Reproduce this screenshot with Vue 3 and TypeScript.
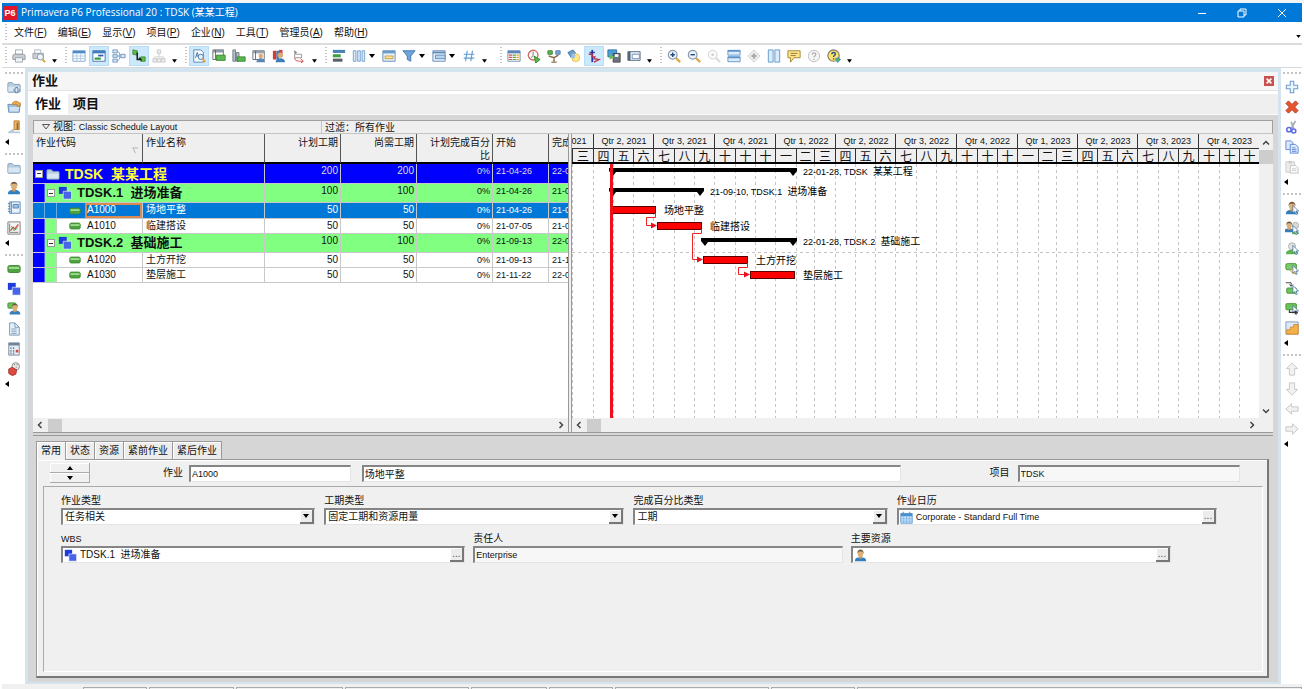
<script setup lang="ts">
import { computed, ref } from 'vue'

interface Tool { icon: string; name: string; on?: boolean; caret?: boolean }
interface Row {
  level: number; code: string; cjk?: string; name?: string; height: number
  planned: string; remaining: string; pct: string; start: string; finish: string
  from: number; to: number; label?: string; selected?: boolean
}

const person = '<path d="M1 15c0-4 3-5 7-5s7 1 7 5z" fill="#2f7fc0"/><path d="M6 9h4v3H6z" fill="#c9955c"/><ellipse cx="8" cy="6" rx="3.4" ry="4" fill="#dcb079"/><path d="M4 6c-.5-7 8.500-7 8 0-1-3-2-3-4-3s-3 0-4 3z" fill="#6d5a43"/>'
const cursor = '<path d="M9 5v9l2-2 1.500 3.500 1.500-.7-1.500-3.300h3z" fill="#fff" stroke="#4470a0" stroke-width=".9"/>'
const square2 = '<path d="M1 1h9v8H1z" fill="#1e3be0"/><path d="M6 6h9.500v9H6z" fill="#4a66e8" stroke="#fff" stroke-width=".7"/>'
const pill = '<rect x="1" y="4" width="14" height="8" rx="2" fill="#4fa33f" stroke="#3a8430"/><path d="M2 5.500h12v2.500H2z" fill="#9cd98d"/>'
const folder = '<path d="M1 4q0-1 1-1h4l2 2h6q1 0 1 1v7q0 1-1 1H2q-1 0-1-1z" fill="#b9cde0" stroke="#7d9ab8"/><path d="M1.500 7.500h13V13h-13z" fill="#d8e5f2"/>'
const lens = '<path d="M10 10l5 5" stroke="#e0aa4b" stroke-width="2.800"/><circle cx="6.500" cy="6.500" r="5" fill="#e8f2fb" stroke="#8a97a5" stroke-width="1.300"/>'

const icons: Record<string, string> = {
  print: '<path d="M4 1h8v5H4z" fill="#fff" stroke="#9aa3ac"/><path d="M1 8q0-2 2-2h10q2 0 2 2v4H1z" fill="#c9ced4" stroke="#8f979f"/><path d="M4 10h8v5H4z" fill="#eef4fa" stroke="#9aa3ac"/>',
  preview: '<path d="M3 1h7v4H3z" fill="#fff" stroke="#a8b0b8"/><path d="M1 5h12v6H1z" fill="#c9ced4" stroke="#9aa2aa"/><circle cx="9.500" cy="9" r="3.500" fill="#eef5fc" stroke="#8a939c"/><path d="M12 12l3 3" stroke="#e0a040" stroke-width="2.200"/>',
  table: '<path d="M1 2h14v12H1z" fill="#fff" stroke="#7fa6cf"/><path d="M1 2h14v3H1z" fill="#4f8bc9"/><path d="M1 8h14M1 11h14M5.500 5v9M10 5v9" stroke="#a9c6e4"/>',
  gantt: '<path d="M1 2h14v12H1z" fill="#fff" stroke="#3b6ea5"/><path d="M1 2h14v3H1z" fill="#3e7ec0"/><path d="M7 7.500h6" stroke="#2c58b8" stroke-width="2"/><path d="M3 11h7" stroke="#2f9a3a" stroke-width="2.500"/>',
  network: '<path d="M6 3q3 0 3 5 0 5-3 5M6 8h4" stroke="#6c93bf" fill="none"/><path d="M1 1h5v3.500H1zM1 6.500h5v3H1zM1 11.500h5v3.500H1zM10 6h5v4h-5z" fill="#d6e7f8" stroke="#6c93bf"/>',
  trace: '<path d="M1 1l5 1v5l-5-1zM10 9h5v5h-5z" fill="#5fbf4b" stroke="#3a8a2e"/><path d="M6 4v8h4M8 10l3 3" stroke="#222" stroke-width="1.800" fill="none"/>',
  tree: '<path d="M8 5v4M3 12V9h10v3" stroke="#ccc" fill="none"/><path d="M6 1h4v4H6zM1 11h4v4H1zM6 11h4v4H6zM11 11h4v4h-4z" fill="#ededed" stroke="#c8c8c8"/>',
  find: '<path d="M2 1h8l3 3v11H2z" fill="#f7fbff" stroke="#4f7fb4"/><path d="M4 10l2-6 2 6M5 8h2" stroke="#2f66a8" fill="none"/><circle cx="10" cy="9" r="3" fill="#dbeefc" stroke="#4d7396"/><path d="M12 11l3 4" stroke="#e0a040" stroke-width="2"/>',
  sheet: '<path d="M1 1h12v11H1z" fill="#fff" stroke="#5c6670"/><path d="M1 1h12v3H1z" fill="#8c98a4"/><path d="M4 1v11" stroke="#5c6670"/><path d="M5 7h10v6H5z" fill="#5cb84e" stroke="#35872b"/>',
  steps: '<path d="M1 1h3v13H1zM5 4h3v10H5z" fill="#b5bfca" stroke="#6b7681"/><path d="M6 9h9v5H6z" fill="#5cb84e" stroke="#35872b"/>',
  usage: '<path d="M1 2h13v10H1z" fill="#fff" stroke="#5c6670"/><path d="M1 2h13v3H1z" fill="#97a2ae"/><path d="M4 2v10" stroke="#5c6670"/><circle cx="10" cy="8" r="2.500" fill="#d9ac77"/><path d="M5 15c0-6 10-6 10 0z" fill="#5a86b0"/>',
  profile: '<path d="M1 2h4v10H1z" fill="#d33c32"/><path d="M5 2h3v10H5z" fill="#4c77b8"/><path d="M8 1h4v8H8z" fill="#c44"/><circle cx="9.500" cy="7" r="3" fill="#d9ac77"/><path d="M4 15c0-6 11-6 11 0z" fill="#3e7fb8"/>',
  logic: '<path d="M2 1l4 3-3 2z" fill="#888"/><path d="M3 6h8v4H3z" fill="#fff" stroke="#8f8f8f"/><path d="M3 10c0 4 4 4 9 4M10 11l3 3-3 2" stroke="#d04040" fill="none"/>',
  bars: '<path d="M1 1h14v3.500H1z" fill="#4a7fb5"/><path d="M1 6h9v3.500H1z" fill="#3ca03c"/><path d="M1 11h11v3.500H1z" fill="#59606a"/>',
  cols: '<path d="M1.500 2h3v12h-3zM6.500 2h3v12h-3zM11.500 2h3v12h-3z" fill="#d9e9f8" stroke="#6d9bcb"/>',
  layout: '<path d="M1 2h14v12H1z" fill="#e4effa" stroke="#5f88b5"/><path d="M1 2h14v3H1z" fill="#6d9bcb"/><path d="M3.500 8h9v3h-9z" fill="#ffe9a8" stroke="#c49a3a"/>',
  filter: '<path d="M1 2h14l-5 6v6l-4-2V8z" fill="#6ea4d8" stroke="#3c73aa"/>',
  group: '<path d="M1 2h14v12H1z" fill="#e4effa" stroke="#5f88b5"/><path d="M1 4h14" stroke="#5f88b5" stroke-width="2"/><path d="M4 7h11v4H4z" fill="#b9d4ef" stroke="#5f88b5"/>',
  hash: '<path d="M6 2L4 14M12 2l-2 12M2 6h12M2 10.500h12" stroke="#5d9bd3" stroke-width="1.300"/>',
  columns2: '<path d="M1 2h14v12H1z" fill="#fff" stroke="#6b8db5"/><path d="M1 2h14v3H1z" fill="#5b86ba"/><path d="M2 7h4M2 9.500h4M2 12h4" stroke="#d2544a" stroke-width="1.400"/><path d="M6.500 7h4M6.500 9.500h4M6.500 12h4" stroke="#58a94c" stroke-width="1.400"/><path d="M11 7h3M11 9.500h3M11 12h3" stroke="#e6a93a" stroke-width="1.400"/>',
  schedule: '<circle cx="7" cy="7" r="5.500" fill="#fff" stroke="#d26a62" stroke-width="1.600"/><path d="M7 3v4l-2 3" stroke="#666" fill="none"/><path d="M8 8l7 4-5 4z" fill="#55b848" stroke="#2f8726"/>',
  level: '<path d="M1 2h5v4H1z" fill="#5eb74f" stroke="#377f2c"/><path d="M10 2h5v4h-5z" fill="#77a7d9" stroke="#4d7cac"/><path d="M2 8l6 2 5-3M8 9v5M5 15h6" stroke="#8a6c4e" stroke-width="1.700" fill="none"/>',
  assign: '<path d="M1 4l6-3 3 4-5 5z" fill="#6e9fd4" stroke="#476f9e"/><circle cx="10" cy="10" r="4.500" fill="#ffe98a" stroke="#e6c04f"/><path d="M6 5l4 2-2 4-4-1z" fill="#9cc0e8"/>',
  spot: '<path d="M6 1v14" stroke="#2135a8" stroke-width="2"/><path d="M2 6h4v3h3L8 11l6 1-6 3" stroke="#b6304b" fill="none" stroke-width="1.500"/><path d="M3 4h6" stroke="#2135a8" stroke-width="1.500"/>',
  store: '<path d="M1 1h10v8H1z" fill="#48a0dd" stroke="#2e6c9c"/><path d="M7 5h8v10H7z" fill="#6d7680" stroke="#444"/><path d="M9 6h4v3H9z" fill="#fff"/><path d="M3 6l6 3-6 3z" fill="#61c04d"/>',
  board: '<path d="M1 3h14v10H1z" fill="#e3ecf5" stroke="#54677a"/><path d="M1 3h3v10H1z" fill="#54677a"/><path d="M6 6h8v5H6z" fill="#fff" stroke="#6b8db5"/>',
  zoomin: lens + '<path d="M4 6.500h5M6.500 4v5" stroke="#234b80" stroke-width="1.600"/>',
  zoomout: lens + '<path d="M4 6.500h5" stroke="#234b80" stroke-width="1.600"/>',
  zoomfit: '<path d="M10 10l5 5" stroke="#ddd" stroke-width="2.500"/><circle cx="6.500" cy="6.500" r="5" fill="#fafafa" stroke="#ccc"/><circle cx="6.500" cy="6.500" r="1.500" fill="#ccc"/>',
  split: '<path d="M1 1.500h14v5.500H1zM1 9h14v5.500H1z" fill="#dcebfa" stroke="#5c93cd"/><path d="M1 2h14M1 9.500h14" stroke="#5c93cd" stroke-width="2"/>',
  diamond: '<path d="M8 1l7 7-7 7-7-7z" fill="#eee" stroke="#ccc"/><path d="M8 5v6M5 8h6" stroke="#aaa" stroke-width="2.500"/>',
  vsplit: '<path d="M1.500 1h5.500v14H1.500zM9 1h5.500v14H9z" fill="#dcebfa" stroke="#5c93cd"/>',
  comment: '<path d="M1 2h14v8H8l-4 5v-5H1z" fill="#ffe58a" stroke="#9b7b2e"/><path d="M4 5h8M4 7.500h6" stroke="#8a7436"/>',
  helpoff: '<circle cx="8" cy="8" r="6.500" fill="#f5f5f5" stroke="#bbb"/><path d="M6 6.500c0-3 4.500-2.500 4 0-.3 1.500-2 1.500-2 3M8 11v1.500" stroke="#aaa" fill="none" stroke-width="1.300"/>',
  help: '<circle cx="7.500" cy="7.500" r="6.500" fill="#ffe26b" stroke="#7c7d66" stroke-width="1.300"/><path d="M5.500 6c0-3 4.500-2.500 4 0-.3 1.500-2 1.500-2 3M7.500 10.500V12" stroke="#2a4f85" fill="none" stroke-width="1.600"/><path d="M9 11l4-2 3 3-4 4z" fill="#3f92c9"/><path d="M10 13l4-3v4z" fill="#64b447"/>',
  foldernew: folder + '<path d="M11 8v7M7.500 11.500h7" stroke="#6888ab" stroke-width="3"/><path d="M11 9v5M8.500 11.500h5" stroke="#e2edf8" stroke-width="1.200"/>',
  folderopen: '<path d="M1 5h14l-1 9H2z" fill="#9fc1e3" stroke="#648bb2"/><path d="M3 8h11l-1 5H3z" fill="#cfe2f4"/><path d="M6 5c1-5 7-4 8-1l1-1v4h-4l1-1c-1-2-3-2-4 0z" fill="#f2b04c" stroke="#b8782a"/>',
  exit: '<path d="M8 1h6v10H8z" fill="#f1b45e" stroke="#b2772b"/><path d="M11 3h2v8h-2z" fill="#8a6b45"/><path d="M1 14l7-5v4h7v2H1z" fill="#b8cadc"/>',
  folder, person, square2, pill,
  book: '<path d="M3 1h12v13H3z" fill="#e9f2fb" stroke="#4e80b3"/><path d="M5 1v13" stroke="#4e80b3"/><path d="M1 3h3M1 6h3M1 9h3M1 12h3" stroke="#6d92b8" stroke-width="1.300"/><path d="M7 4h6v4H7z" fill="#9fc2e6" stroke="#4e80b3"/>',
  chart: '<path d="M1 1h14v14H1z" fill="#f3f3f3" stroke="#777"/><path d="M3 3v10h10" stroke="#777" fill="none"/><path d="M4 11l3-4 2 2 4-5" stroke="#d04343" stroke-width="1.400" fill="none"/><path d="M5 6l3 5 4-3" stroke="#3ca03c" fill="none"/>',
  pillperson: '<rect x="1" y="1" width="9" height="6" rx="1" fill="#6dc45c" stroke="#3f8f34"/><g transform="translate(2 1) scale(.88)">' + person + '</g>',
  doc: '<path d="M3 1h6l5 5v9H3z" fill="#e6f0fa" stroke="#7392b2"/><path d="M9 1v5h5M5 8h6M5 10.500h6M5 13h6" stroke="#7392b2" fill="none"/>',
  calc: '<path d="M2 1h12v14H2z" fill="#e8eef5" stroke="#71859a"/><path d="M2 1h12v3H2z" fill="#71859a"/><path d="M4.500 6v8M7.500 6v8" stroke="#71859a" stroke-width="1.500" stroke-dasharray="2 1"/><path d="M10 9h3v3h-3z" fill="#d24b44"/>',
  risk: '<circle cx="10" cy="5" r="4.300" fill="#e6e6e6" stroke="#888"/><path d="M8 3h1M11 3h1M10 6h1" stroke="#666"/><path d="M2 8l4-2 5 3-1 5-4 1.500L2 13z" fill="#dc4b42" stroke="#a42d27"/>',
  plus: '<path d="M6 1.500h4V6h4.500v4H10v4.500H6V10H1.500V6H6z" fill="#e9f4fd" stroke="#6f9cc9" stroke-width="1.200"/>',
  del: '<path d="M4 1l4 4 4-4 3 3-4 4 4 4-3 3-4-4-4 4-3-3 4-4-4-4z" fill="#e8542e" stroke="#b03a20"/>',
  cut: '<path d="M12 1L7 10M7 2l3 8" stroke="#a5acb3" stroke-width="2"/><circle cx="4.500" cy="11" r="2.500" fill="none" stroke="#5c6be0" stroke-width="1.800"/><circle cx="10" cy="12.500" r="2.300" fill="none" stroke="#5c6be0" stroke-width="1.800"/>',
  copy: '<path d="M1 1h6l2 2v8H1z" fill="#dce8fb" stroke="#5d83d6"/><path d="M6 5h6l3 3v7H6z" fill="#dce8fb" stroke="#5d83d6"/><path d="M8 9h4M8 11h5M8 13h5" stroke="#5d83d6"/>',
  paste: '<path d="M1 2h10v12H1z" fill="#ededed" stroke="#c9c9c9"/><path d="M4 1h4v3H4z" fill="#ccc"/><path d="M6 6h6l3 3v6H6z" fill="#fafafa" stroke="#c0c0c0"/><path d="M8 10h5M8 12h5" stroke="#ccc"/>',
  persona: person + cursor,
  peoplea: '<g transform="translate(-2 0) scale(.85)">' + person + '</g><circle cx="12" cy="5" r="3.500" fill="#dcdcdc" stroke="#aaa"/><path d="M8 15c0-5 8-5 8 0z" fill="#61b757"/>' + cursor,
  rolea: '<path d="M1 15c0-4 3-5 7-5s7 1 7 5z" fill="#5cb54f"/><circle cx="8" cy="6" r="4" fill="#e3e3e3" stroke="#aaa"/>' + cursor,
  codea: '<rect x="1" y="3" width="12" height="7" rx="1.500" fill="#7bcb6b" stroke="#3f8f34"/><path d="M10 7l4 4-4 4-4-4z" fill="#ffe08a" stroke="#caa044"/>' + cursor,
  preda: '<path d="M1 2h6v4M5 4l2 2 2-2" stroke="#333" fill="none"/><rect x="2" y="8" width="11" height="6" rx="1" fill="#6dc45c" stroke="#3f8f34"/>' + cursor,
  succa: '<rect x="1" y="3" width="12" height="7" rx="1" fill="#6dc45c" stroke="#3f8f34"/>' + cursor + '<path d="M5 10v3h8M11 11l3 2-3 2" stroke="#333" fill="none" stroke-width="1.200"/>',
  stairs: '<path d="M1 1h14v14H1z" fill="#dbe8f8" stroke="#7796c4"/><path d="M2 14v-4h4V7h4V4h5v11H2z" fill="#f6b04a" stroke="#d28a25"/>',
  up: '<path d="M8 1l6.500 6.500h-3.500V15H5V7.500H1.500z" fill="#f1f1f1" stroke="#c2c2c2"/>',
  down: '<path d="M8 15L1.500 8.500H5V1h6v7.500h3.500z" fill="#f1f1f1" stroke="#c2c2c2"/>',
  left: '<path d="M1 8l6.500-6v3.500H15v5H7.500V14z" fill="#f1f1f1" stroke="#c2c2c2"/>',
  right: '<path d="M15 8L8.500 2v3.500H1v5h7.500V14z" fill="#f1f1f1" stroke="#c2c2c2"/>',
  calendar: '<path d="M1 3h14v12H1z" fill="#cfe6fb" stroke="#4a90d0"/><path d="M1 3h14v3.500H1z" fill="#4a90d0"/><path d="M1 9.500h14M1 12.500h14M4.500 6v9M8 6v9M11.500 6v9" stroke="#6fadde" stroke-width=".8"/><path d="M4 1v3M12 1v3" stroke="#888" stroke-width="1.300"/>',
}

const menus = [['文件', 'F'], ['编辑', 'E'], ['显示', 'V'], ['项目', 'P'], ['企业', 'N'], ['工具', 'T'], ['管理员', 'A'], ['帮助', 'H']]

const t = (icon: string, name: string, on = false, caret = false): Tool => ({ icon, name, on, caret })
const toolbar: Tool[][] = [
  [t('print', '打印'), t('preview', '打印预览')],
  [t('table', '作业表格'), t('gantt', '横道图', true), t('network', '作业网络图'), t('trace', '跟踪逻辑', true), t('tree', '组织图')],
  [t('find', '作业详情', true), t('sheet', '作业使用剖析表'), t('steps', '作业使用直方图'), t('usage', '资源使用剖析表'), t('profile', '资源使用直方图'), t('logic', '逻辑关系')],
  [t('bars', '横道'), t('cols', '栏位', false, true), t('layout', '时间标尺'), t('filter', '过滤器', false, true), t('group', '分组和排序', false, true), t('hash', '编号')],
  [t('columns2', '表格字体'), t('schedule', '进度计算'), t('level', '资源平衡'), t('assign', '应用实际值'), t('spot', '进展线', true), t('store', '保存期间执行情况'), t('board', '汇总')],
  [t('zoomin', '放大'), t('zoomout', '缩小'), t('zoomfit', '缩放至合适'), t('split', '水平拆分'), t('diamond', '居中'), t('vsplit', '垂直拆分'), t('comment', '提示'), t('helpoff', '关于'), t('help', '帮助')],
]
const leftRail = [
  ['foldernew', 'folderopen', 'exit'],
  ['folder', 'person', 'book', 'chart'],
  ['pill', 'square2', 'pillperson', 'doc', 'calc', 'risk'],
]
const rightRail = [
  ['plus', 'del', 'cut', 'copy', 'paste'],
  ['persona', 'peoplea', 'rolea', 'codea', 'preda', 'succa', 'stairs'],
  ['up', 'down', 'left', 'right'],
]

const day = (s: string) => Math.round((Date.parse(s) - Date.parse('2021-04-01')) / 86400000)
const rows: Row[] = [
  { level: 0, code: 'TDSK', cjk: '某某工程', height: 20, planned: '200', remaining: '200', pct: '0%', start: '21-04-26', finish: '22-01-28', from: day('2021-04-26'), to: day('2022-01-29'), label: '22-01-28, TDSK' },
  { level: 1, code: 'TDSK.1', cjk: '进场准备', height: 19, planned: '100', remaining: '100', pct: '0%', start: '21-04-26', finish: '21-09-10', from: day('2021-04-26'), to: day('2021-09-11'), label: '21-09-10, TDSK.1' },
  { level: 2, code: 'A1000', name: '场地平整', height: 16, planned: '50', remaining: '50', pct: '0%', start: '21-04-26', finish: '21-07-02', from: day('2021-04-26'), to: day('2021-07-03'), selected: true },
  { level: 2, code: 'A1010', name: '临建搭设', height: 15, planned: '50', remaining: '50', pct: '0%', start: '21-07-05', finish: '21-09-10', from: day('2021-07-05'), to: day('2021-09-11') },
  { level: 1, code: 'TDSK.2', cjk: '基础施工', height: 19, planned: '100', remaining: '100', pct: '0%', start: '21-09-13', finish: '22-01-28', from: day('2021-09-13'), to: day('2022-01-29'), label: '22-01-28, TDSK.2' },
  { level: 2, code: 'A1020', name: '土方开挖', height: 15, planned: '50', remaining: '50', pct: '0%', start: '21-09-13', finish: '21-11-19', from: day('2021-09-13'), to: day('2021-11-20') },
  { level: 2, code: 'A1030', name: '垫层施工', height: 15, planned: '50', remaining: '50', pct: '0%', start: '21-11-22', finish: '22-01-28', from: day('2021-11-22'), to: day('2022-01-29') },
]

const PX_PER_DAY = 0.663
const dayX = (d: number) => Math.round(22 + d * PX_PER_DAY)
const monthX = (i: number) => dayX(day(`${2021 + Math.floor(i / 12)}-${String((i % 12) + 1).padStart(2, '0')}-01`))
const monthNames = ['一', '二', '三', '四', '五', '六', '七', '八', '九', '十', '十', '十']
const quarters = Array.from({ length: 12 }, (_, q) => ({
  name: `Qtr ${(q % 4) + 1}, ${2021 + Math.floor(q / 4)}`,
  width: monthX(q * 3 + 3) - monthX(q * 3),
  months: [0, 1, 2].map(m => ({ name: monthNames[(q * 3 + m) % 12], width: monthX(q * 3 + m + 1) - monthX(q * 3 + m) })),
}))
const gridLines = Array.from({ length: 34 }, (_, i) => monthX(i + 2))

const bars = computed(() => {
  let top = 0
  return rows.map(r => {
    const b = { ...r, x1: dayX(r.from), x2: dayX(r.to), y: top + (r.level < 2 ? 4 : 3) }
    top += r.height
    return b
  })
})
const summaryPath = (a: number, b: number, y: number) =>
  `M${a - 2} ${y}H${b + 2}V${y + 3}L${b - 2} ${y + 8}L${b - 5} ${y + 4}H${a + 5}L${a + 2} ${y + 8}L${a - 2} ${y + 3}z`
const links = computed(() => [[2, 3], [3, 5], [5, 6]].map(([p, s]) => {
  const a = bars.value[p], b = bars.value[s]
  const y = b.y + 3
  return { line: `M${a.x2 - 0.5} ${a.y + 7}v4.500h-9V${y + 0.5}H${b.x1 - 3}`, head: `M${b.x1} ${y + 0.5}l-6-3v6z` }
}))

const tab = ref('常用')
const detailTabs = ['常用', '状态', '资源', '紧前作业', '紧后作业']
const status = ['', '访问模式: 共享', '数据日期: 21-04-26', '基线: 当前项目', '用户: admin', '', '', '', '']
</script>

<template>
  <div class="app">
    <header class="title">
      <span class="logo">P6</span>
      <h1>Primavera P6 Professional 20 : TDSK <span>(某某工程)</span></h1>
      <div class="win">
        <button aria-label="最小化"><svg viewBox="0 0 10 10"><path d="M1 5.500h8" /></svg></button>
        <button aria-label="还原"><svg viewBox="0 0 10 10"><path d="M1 3h6v6H1zM3 3V1h6v6H7" /></svg></button>
        <button aria-label="关闭"><svg viewBox="0 0 10 10"><path d="M1 1l8 8M9 1L1 9" /></svg></button>
      </div>
    </header>

    <nav class="menu">
      <i class="vgrip"></i>
      <button v-for="m in menus" :key="m[1]">{{ m[0] }}<span>(<u>{{ m[1] }}</u>)</span></button>
      <svg class="more" viewBox="0 0 6 4"><path d="M0 0h6L3 4z" /></svg>
    </nav>

    <div class="toolbar">
      <div v-for="(g, i) in toolbar" :key="i" class="tools" :class="{ roomy: i === 3 }">
        <i class="vgrip"></i>
        <template v-for="b in g" :key="b.icon">
          <button class="tool" :class="{ on: b.on }" :aria-label="b.name"><svg viewBox="0 0 16 16" v-html="icons[b.icon]"></svg></button>
          <svg v-if="b.caret" class="caret" viewBox="0 0 6 4"><path d="M0 0h6L3 4z" /></svg>
        </template>
        <svg class="end" viewBox="0 0 6 4"><path d="M0 0h6L3 4z" /></svg>
      </div>
    </div>

    <div class="work">
      <aside class="rail">
        <div v-for="(g, i) in leftRail" :key="i" class="rgroup">
          <i class="hgrip"></i>
          <button v-for="n in g" :key="n" class="tool" :aria-label="n"><svg viewBox="0 0 16 16" v-html="icons[n]"></svg></button>
          <svg class="rend" viewBox="0 0 4 6"><path d="M4 0v6L0 3z" /></svg>
        </div>
      </aside>

      <main class="frame">
        <div class="caption"><h2>作业</h2><button class="close" aria-label="关闭视图"><svg viewBox="0 0 10 10"><path d="M2 2l6 6M8 2L2 8" /></svg></button></div>
        <div class="views" role="tablist">
          <button role="tab" aria-selected="true" class="cur">作业</button>
          <button role="tab" aria-selected="false">项目</button>
        </div>

        <div class="inner">
          <div class="layoutbar">
            <button class="lay"><svg viewBox="0 0 8 6"><path d="M.5.5h7L4 5z" /></svg>视图: <span class="lat">Classic Schedule Layout</span></button>
            <span class="filt">过滤：所有作业</span>
          </div>

          <div class="panes">
            <section class="left">
              <div class="tablebox">
                <table>
                  <colgroup><col class="c1"><col class="c2"><col class="c3"><col class="c4"><col class="c5"><col class="c6"><col class="c7"></colgroup>
                  <thead>
                    <tr>
                      <th>作业代码<svg class="sort" viewBox="0 0 8 8"><path d="M1 1h6M1 1l3 6" /></svg></th>
                      <th>作业名称</th><th class="r">计划工期</th><th class="r">尚需工期</th><th class="r">计划完成百分比</th><th>开始</th><th>完成</th>
                    </tr>
                  </thead>
                  <tbody>
                    <tr v-for="r in rows" :key="r.code" :class="['l' + r.level, { sel: r.selected }]" :style="{ height: r.height + 'px' }">
                      <td :colspan="r.level < 2 ? 2 : 1" class="tree">
                        <div class="treeline" :style="{ height: r.height - 1 + 'px' }">
                          <i v-if="r.level > 0" class="band b0"></i>
                          <i v-if="r.level > 1" class="band b1"></i>
                          <template v-if="r.level < 2">
                            <button class="exp" aria-label="折叠"></button>
                            <svg class="nodeic" viewBox="0 0 16 16" v-html="icons[r.level === 0 ? 'folder' : 'square2']"></svg>
                            <b>{{ r.code }}&nbsp; {{ r.cjk }}</b>
                          </template>
                          <template v-else>
                            <svg class="leafic" viewBox="0 0 16 16" v-html="icons.pill"></svg>
                            <span class="code">{{ r.code }}</span>
                          </template>
                        </div>
                      </td>
                      <td v-if="r.level > 1">{{ r.name }}</td>
                      <td class="r">{{ r.planned }}</td><td class="r">{{ r.remaining }}</td><td class="r"><span class="lat">{{ r.pct }}</span></td>
                      <td><span class="lat">{{ r.start }}</span></td><td><span class="lat">{{ r.finish }}</span></td>
                    </tr>
                  </tbody>
                </table>
              </div>
              <div class="hscroll">
                <button aria-label="向左"><svg viewBox="0 0 8 8"><path d="M5.500 1l-3 3 3 3" /></svg></button><i class="thumb"></i>
                <button class="last" aria-label="向右"><svg viewBox="0 0 8 8"><path d="M2.500 1l3 3-3 3" /></svg></button>
              </div>
            </section>

            <div class="splitter"></div>

            <section class="right">
              <div class="chartcol">
                <div class="scale">
                  <div class="strip" :style="{ marginLeft: monthX(0) + 'px' }">
                    <div v-for="q in quarters" :key="q.name" class="qtr" :style="{ width: q.width + 'px' }">
                      <div class="qname lat">{{ q.name }}</div>
                      <div class="months"><span v-for="(m, i) in q.months" :key="i" :style="{ width: m.width + 'px' }">{{ m.name }}</span></div>
                    </div>
                  </div>
                </div>
                <svg class="chart">
                  <line v-for="x in gridLines" :key="x" :x1="x - 0.5" :x2="x - 0.5" y1="0" y2="100%" class="grid" />
                  <line x1="0" x2="100%" y1="88.500" y2="88.500" class="grid" />
                  <template v-for="b in bars" :key="b.code">
                    <path v-if="b.level < 2" :d="summaryPath(b.x1, b.x2, b.y)" />
                    <rect v-else :x="b.x1 + 0.5" :y="b.y + 0.5" :width="b.x2 - b.x1 - 1" height="7" class="task" />
                    <text v-if="b.level < 2" :x="b.x2 + 8" :y="b.y + 7"><tspan class="tl">{{ b.label }}</tspan><tspan dx="5">{{ b.cjk }}</tspan></text>
                    <text v-else :x="b.x2 + 8" :y="b.y + 8">{{ b.name }}</text>
                  </template>
                  <g v-for="l in links" :key="l.line"><path :d="l.line" class="link" /><path :d="l.head" class="head" /></g>
                  <rect :x="bars[0].x1 - 1" y="0" width="3" height="100%" class="now" />
                </svg>
                <div class="hscroll">
                  <button aria-label="向左"><svg viewBox="0 0 8 8"><path d="M5.500 1l-3 3 3 3" /></svg></button><i class="thumb"></i>
                  <button class="last" aria-label="向右"><svg viewBox="0 0 8 8"><path d="M2.500 1l3 3-3 3" /></svg></button>
                </div>
              </div>
              <div class="vscroll">
                <button aria-label="向上"><svg viewBox="0 0 8 8"><path d="M1 5.500l3-3 3 3" /></svg></button><i class="thumb"></i>
                <button class="last" aria-label="向下"><svg viewBox="0 0 8 8"><path d="M1 2.500l3 3 3-3" /></svg></button>
              </div>
            </section>
          </div>

          <section class="details">
            <div class="dtabs" role="tablist">
              <button v-for="d in detailTabs" :key="d" role="tab" :aria-selected="tab === d" :class="{ cur: tab === d }" @click="tab = d">{{ d }}</button>
            </div>
            <div class="dpanel">
              <div class="idrow">
                <div class="spin">
                  <button aria-label="上一个"><svg viewBox="0 0 6 4"><path d="M0 4h6L3 0z" /></svg></button>
                  <button aria-label="下一个"><svg viewBox="0 0 6 4"><path d="M0 0h6L3 4z" /></svg></button>
                </div>
                <label for="act">作业</label>
                <input id="act" class="box lat f-id" value="A1000">
                <input class="box f-name" aria-label="作业名称" value="场地平整">
                <label for="proj" class="lproj">项目</label>
                <input id="proj" class="box lat ro f-proj" value="TDSK" readonly>
              </div>
              <div class="fieldset">
                <div class="frow one">
                  <div class="field"><label for="type">作业类型</label><div class="box combo"><select id="type"><option>任务相关</option></select><span class="drop"><svg viewBox="0 0 6 4"><path d="M0 0h6L3 4z" /></svg></span></div></div>
                  <div class="field"><label for="dur">工期类型</label><div class="box combo"><select id="dur"><option>固定工期和资源用量</option></select><span class="drop"><svg viewBox="0 0 6 4"><path d="M0 0h6L3 4z" /></svg></span></div></div>
                  <div class="field"><label for="pct">完成百分比类型</label><div class="box combo"><select id="pct"><option>工期</option></select><span class="drop"><svg viewBox="0 0 6 4"><path d="M0 0h6L3 4z" /></svg></span></div></div>
                  <div class="field"><label for="cal">作业日历</label><div class="box combo"><svg class="fic" viewBox="0 0 16 16" v-html="icons.calendar"></svg><input id="cal" class="lat" value="Corporate - Standard Full Time"><button class="drop" aria-label="选择日历">...</button></div></div>
                </div>
                <div class="frow two">
                  <div class="field"><label for="wbs" class="lat">WBS</label><div class="box combo"><svg class="fic" viewBox="0 0 16 16" v-html="icons.square2"></svg><input id="wbs" value="TDSK.1  进场准备"><button class="drop" aria-label="选择 WBS">...</button></div></div>
                  <div class="field"><label for="resp">责任人</label><input id="resp" class="box lat ro" value="Enterprise" readonly></div>
                  <div class="field"><label for="res">主要资源</label><div class="box combo"><svg class="fic" viewBox="0 0 16 16" v-html="icons.person"></svg><input id="res" value=""><button class="drop" aria-label="选择资源">...</button></div></div>
                </div>
              </div>
            </div>
          </section>
        </div>
      </main>

      <aside class="rail">
        <div v-for="(g, i) in rightRail" :key="i" class="rgroup">
          <i class="hgrip"></i>
          <button v-for="n in g" :key="n" class="tool" :aria-label="n"><svg viewBox="0 0 16 16" v-html="icons[n]"></svg></button>
          <svg class="rend" viewBox="0 0 4 6"><path d="M4 0v6L0 3z" /></svg>
        </div>
      </aside>
    </div>

    <footer class="status"><span v-for="(s, i) in status" :key="i">{{ s }}</span></footer>
  </div>
</template>

<style>
html, body { background: #fff; }
</style>

<style scoped>
* { box-sizing: border-box; }
.app { height: 100vh; min-height: 560px; display: flex; flex-direction: column; padding: 0 2px; border-top: 3px solid #f3f3f3; background: #fff; overflow: hidden; font: 10px/14px "Liberation Sans", "Noto Sans CJK SC", sans-serif; color: #111; }
button, input, select { font: inherit; color: inherit; border: 0; background: none; padding: 0; margin: 0; min-width: 0; }
button { display: flex; align-items: center; justify-content: center; }
h1, h2 { margin: 0; }
svg { display: block; flex: none; }
.lat { font-size: 9px; }

.title { flex: none; height: 19px; background: #0078d7; color: #fff; display: flex; align-items: center; }
.logo { width: 14px; height: 14px; margin-left: 1px; background: #e0162b; font-weight: bold; font-size: 9px; line-height: 14px; text-align: center; }
h1 { margin-left: 4px; font: 10px/19px "Open Sans", "Noto Sans CJK SC", sans-serif; }
.win { margin-left: auto; display: flex; padding-right: 15px; gap: 30px; }
.win svg { width: 10px; height: 10px; fill: none; stroke: #fff; stroke-width: 1; }

.menu { flex: none; height: 23px; display: flex; align-items: center; gap: 11px; padding-left: 3px; border-bottom: 2px solid #dcdcdc; }
.menu button { white-space: nowrap; }
.menu .vgrip { margin-right: -4px; }
.more { width: 5px; height: 3px; margin: 8px 1px 0 auto; }
.vgrip { width: 2px; height: 18px; background: repeating-linear-gradient(#c4c4c4 0 1px, transparent 1px 3px); flex: none; }

.toolbar { flex: none; height: 22px; display: flex; align-items: center; padding-left: 3px; }
.tools { display: flex; align-items: center; height: 20px; }
.tools .vgrip { margin-right: 2px; }
.tool { width: 20px; height: 20px; flex: none; }
.tool svg { width: 14px; height: 14px; }
.tool.on { background: #cce8fb; border: 1px solid #b6defa; }
.caret { width: 6px; height: 4px; margin: 0 4px 0 0; }
.end { width: 5px; height: 4px; margin: 10px 8px 0 3px; }
.roomy .end { margin-right: 13px; }

.work { flex: 1; min-height: 0; display: flex; border-top: 1px solid #d8d8d8; }
.rail { flex: none; width: 23px; padding-top: 2px; }
.rail:last-child { width: 21px; }
.rgroup { display: flex; flex-direction: column; align-items: center; }
.hgrip { width: 18px; height: 2px; margin: 2px 0 3px; background: repeating-linear-gradient(90deg, #c4c4c4 0 2px, transparent 2px 4px); }
.rend { width: 4px; height: 6px; margin: 2px 0 6px 3px; align-self: flex-start; }

.frame { flex: 1; min-width: 0; display: flex; flex-direction: column; border: solid #d3e4ef; border-width: 4px 3px 2px; background: #d6d6d6; }
.caption { flex: none; height: 19px; background: #f5f5f5; display: flex; align-items: center; justify-content: space-between; padding: 0 4px; border-bottom: 1px solid #e2e2e2; }
h2 { font-size: 13px; line-height: 16px; font-weight: bold; }
.close { width: 10px; height: 10px; background: #c8504f; }
.close svg { width: 8px; height: 8px; stroke: #fff; stroke-width: 2; }
.views { flex: none; height: 24px; background: #efefef; border-top: 3px solid #fff; border-bottom: 1px solid #fafafa; display: flex; }
.views button { padding: 0 5px; font-size: 13px; font-weight: bold; }
.views .cur { background: #fff; width: 40px; }

.inner { flex: 1; min-height: 0; display: flex; flex-direction: column; padding: 5px 5px 4px 5px; }
.layoutbar { flex: none; height: 14px; background: #efefef; border: 1px solid #a0a0a0; border-bottom-color: #c4c4c4; display: flex; }
.lay { width: 288px; justify-content: flex-start; padding-left: 8px; gap: 3px; border-right: 1px solid #c4c4c4; }
.lay svg { width: 8px; height: 6px; fill: none; stroke: #555; }
.filt { padding-left: 3px; line-height: 13px; }

.panes { flex: 1; min-height: 200px; display: flex; background: #fff; border-bottom: 1px solid #999; }
.left { flex: 0 0 535px; min-width: 0; display: flex; flex-direction: column; }
.tablebox { flex: 1; min-height: 0; overflow: hidden; }
table { table-layout: fixed; width: 593px; border-collapse: separate; border-spacing: 0; }
.c1 { width: 110px; } .c2 { width: 122px; } .c3, .c4, .c5 { width: 76px; } .c6 { width: 56px; } .c7 { width: 77px; }
th { height: 30px; padding: 2px 2px 0 3px; vertical-align: top; text-align: left; font-weight: normal; line-height: 13px; background: #efefef; border-right: 1px solid #555; border-bottom: 2px solid #000; position: relative; }
th.r { padding-left: 8px; }
th.r, td.r { text-align: right; }
.sort { position: absolute; right: 3px; bottom: 8px; width: 7px; height: 7px; fill: none; stroke: #aaa; }
td { padding: 0 2px 0 3px; vertical-align: top; white-space: nowrap; overflow: hidden; border-right: 1px solid #c8c8c8; border-bottom: 1px solid #c8c8c8; line-height: 14px; height: 14px; }
td .lat { display: block; }
td.tree { padding: 0; }
.treeline { display: flex; align-items: center; }
.band { width: 12px; height: 100%; flex: none; box-shadow: 0 1px 0 currentColor; }
.b0 { background: #00f; color: #00f; border-right: 1px solid #55f; }
.b1 { background: #80ff80; color: #80ff80; border-right: 1px solid #b8d8b8; }
.l0 td { background: #00f; color: #ddd; }
.l0 b { color: #ff3; font-size: 14px; }
.l1 td { background: #80ff80; }
.l1 b { font-size: 13px; }
.sel td { background: #0078d7; color: #fff; }
.sel .band { background: #0078d7; border-color: #66aee8; }
.exp { width: 8px; height: 8px; margin-left: 2px; background: linear-gradient(#333, #333) center / 4px 1px no-repeat #fff; border: 1px solid #999; flex: none; }
.nodeic { width: 14px; height: 14px; margin: 0 5px 0 3px; }
.leafic { width: 12px; height: 12px; margin: 0 4px 0 12px; }
.code { flex: 1; height: 100%; padding-left: 2px; }
.sel .code { outline: 2px solid #d88a50; outline-offset: -2px; }

.splitter { width: 4px; flex: none; background: #f0f0f0; border: solid #999; border-width: 0 1px; cursor: col-resize; }
.right { flex: 1; min-width: 0; display: flex; }
.chartcol { flex: 1; min-width: 0; display: flex; flex-direction: column; }
.scale { height: 30px; flex: none; overflow: hidden; background: #efefef; border-bottom: 2px solid #000; }
.strip { display: flex; width: max-content; }
.qtr { flex: none; border-right: 1px solid #333; }
.qname { height: 15px; line-height: 15px; text-align: center; border-bottom: 1px solid #333; margin-right: -1px; }
.months { display: flex; }
.months span { flex: none; height: 14px; line-height: 16px; font-size: 12px; text-align: center; border-right: 1px solid #333; overflow: hidden; }
.chart { flex: 1; width: 100%; min-height: 0; }
.grid { stroke: #c4c4c4; stroke-dasharray: 3 3; }
.task { fill: #f00; stroke: #5a0000; }
.link { fill: none; stroke: #e22; }
.head, .now { fill: #ee1018; }
.tl { font-size: 9px; }

.hscroll { flex: none; height: 14px; background: #f0f0f0; display: flex; align-items: center; }
.hscroll button, .vscroll button { width: 14px; height: 14px; flex: none; }
.hscroll svg, .vscroll svg { width: 8px; height: 8px; fill: none; stroke: #444; stroke-width: 1.500; }
.hscroll .thumb { width: 14px; height: 13px; background: #cdcdcd; margin-left: 1px; }
.hscroll .last { margin-left: auto; }
.vscroll { flex: none; width: 14px; background: #f0f0f0; display: flex; flex-direction: column; padding: 2px 0 14px; }
.vscroll .thumb { height: 14px; background: #cdcdcd; }
.vscroll .last { margin-top: auto; }

.details { flex: none; margin-top: 2px; padding: 5px 4px 0 3px; border-top: 1px solid #999; }
.dtabs { display: flex; height: 18px; }
.dtabs button { padding: 0 4px; background: #ececec; border: 1px solid #999; border-width: 1px 1px 0 0; box-shadow: inset 1px 1px #fff; white-space: nowrap; }
.dtabs .cur { background: #f0f0f0; border-left-width: 1px; margin-bottom: -1px; }
.dpanel { height: 219px; background: #f0f0f0; border: 1px solid #999; border-color: #999 #777 #777 #999; border-right-width: 2px; border-bottom-width: 2px; box-shadow: inset 1px 1px #fff; display: flex; flex-direction: column; padding: 2px 4px 4px 6px; }
.idrow { flex: none; display: flex; align-items: center; height: 22px; padding-right: 23px; }
.spin { width: 40px; height: 20px; margin: 0 73px 0 7px; display: flex; flex-direction: column; flex: none; }
.spin button { flex: 1; border-bottom: 1px solid #aaa; border-right: 1px solid #aaa; box-shadow: inset 1px 1px #fff; }
.spin svg, .drop svg { width: 6px; height: 4px; }
label { white-space: nowrap; }
.box { height: 17px; background: #fff; border: solid #858585; border-width: 2px 1px 1px 2px; border-right-color: #e4e4e4; border-bottom-color: #e4e4e4; padding: 0 1px; }
.ro { background: #f7f7f7; }
.f-id { flex: 160 1 0; margin: 0 11px 0 6px; }
.f-name { flex: 545 1 0; }
.lproj { margin: 0 8px 0 89px; }
.f-proj { flex: 222 1 0; }
.fieldset { flex: 1; margin-top: 2px; padding: 7px 0 0 17px; border: 1px solid #aaa; border-right-color: #fff; border-bottom-color: #fff; display: flex; flex-direction: column; gap: 7px; }
.frow { display: grid; }
.one { grid-template-columns: 254fr 300fr 254fr 320fr; gap: 9px; padding-right: 45px; }
.two { grid-template-columns: 404fr 369fr 320fr; gap: 8px; padding-right: 91px; }
.field { display: flex; flex-direction: column; min-width: 0; }
.field label { height: 14px; line-height: 14px; }
.combo { display: flex; align-items: center; padding: 0; }
.combo select, .combo input { flex: 1; height: 14px; padding: 0 2px; appearance: none; outline: none; background: #fff; }
.combo input { padding-left: 3px; }
.drop { width: 14px; height: 14px; flex: none; background: #ececec; border: 1px solid #777; border-width: 0 2px 2px 0; box-shadow: inset 1px 1px #fff; display: flex; align-items: center; justify-content: center; color: #555; line-height: 8px; }
.fic { width: 13px; height: 13px; margin-left: 1px; }

.status { flex: none; height: 5px; overflow: hidden; background: #f0f0f0; display: grid; grid-template-columns: 64fr 85fr 107fr 124fr 76fr 64fr 154fr 84fr 445fr; gap: 2px; padding: 3px 0 0 81px; }
.status span { height: 16px; min-width: 0; border: 1px solid #aaa; padding-left: 2px; white-space: nowrap; line-height: 14px; overflow: hidden; }
</style>
